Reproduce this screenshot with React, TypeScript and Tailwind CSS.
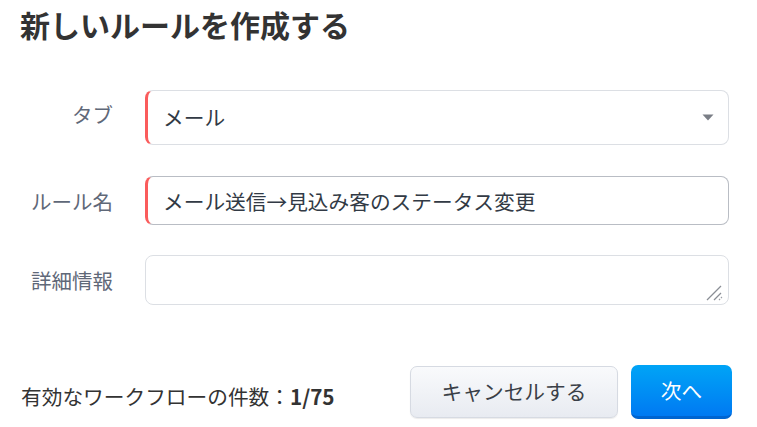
import React from 'react';

const font = { fontFamily: '"Noto Sans CJK JP", "Noto Sans", sans-serif' };

const Label: React.FC<{ children: React.ReactNode; className?: string }> = ({ children, className = '' }) => (
  <div className={`w-[93px] shrink-0 text-right text-[20.5px] leading-[28px] text-[#5f6878] ${className}`}>{children}</div>
);

export default function App() {
  return (
    <div className="w-[757px] h-[427px] bg-white text-[#333] overflow-hidden" style={font}>
      <div className="pl-[20px] pr-[28px]">
        <h1 className="pt-[4px] text-[30px] leading-[40px] font-bold text-[#333]">新しいルールを作成する</h1>

        <div className="mt-[46px] flex flex-col">
          <div className="flex items-center gap-[32px]">
            <Label className="mb-[8px]">タブ</Label>
            <div className="flex-1 h-[55px] flex items-center justify-between rounded-[8px] border border-[#dcdfe4] border-l-[3px] border-l-[#fa5c5c] pl-[15px] pr-[12px]">
              <span className="text-[20.7px] text-[#323a45]">メール</span>
              <svg width="14" height="9" viewBox="0 0 14 9" className="mr-[1px]">
                <path d="M1.5 1.5h11L7 7.5z" fill="#7a7e86" />
              </svg>
            </div>
          </div>

          <div className="mt-[31px] flex items-center gap-[32px]">
            <Label>ルール名</Label>
            <input
              readOnly
              defaultValue="メール送信→見込み客のステータス変更"
              className="flex-1 h-[49px] rounded-[8px] border border-[#b9bdc4] border-l-[3px] border-l-[#fa5c5c] pl-[15px] text-[20.7px] text-[#323a45] outline-none bg-white"
              style={font}
            />
          </div>

          <div className="mt-[30px] flex items-center gap-[32px]">
            <Label>詳細情報</Label>
            <div className="relative flex-1 h-[50px]">
              <textarea
                className="w-full h-full resize-none rounded-[8px] border border-[#dcdfe4] px-[15px] py-[8px] text-[20px] outline-none bg-white"
                style={font}
              />
              <svg width="20" height="20" viewBox="0 0 20 20" className="absolute right-[5px] bottom-[3px] pointer-events-none">
                <path d="M3 18L17 4M10 18L17 11" stroke="#8a8e95" strokeWidth="1.3" />
                <path d="M15 18L18 15" stroke="#9a9ea5" strokeWidth="1.2" strokeDasharray="1.5 1.2" />
              </svg>
            </div>
          </div>
        </div>
      </div>

      <div className="mt-[60px] flex items-center pl-[21px] pr-[25px]">
        <div className="flex-1 text-[20.7px] text-[#333] mt-[10px]">
          有効なワークフローの件数：<span className="font-bold">1/75</span>
        </div>
        <button className="w-[208px] h-[52px] rounded-[7px] border border-[#d6dae2] bg-gradient-to-b from-[#f9fafc] to-[#e8ebf1] text-[20.7px] text-[#3a3f47] shadow-[0_1px_1px_rgba(0,0,0,0.08)]" style={font}>
          キャンセルする
        </button>
        <button className="ml-[13px] w-[101px] h-[54px] rounded-[7px] bg-gradient-to-b from-[#00a4f6] to-[#0079f2] border-b-[3px] border-[#0064d0] text-[20.7px] text-white" style={font}>
          次へ
        </button>
      </div>
    </div>
  );
}
